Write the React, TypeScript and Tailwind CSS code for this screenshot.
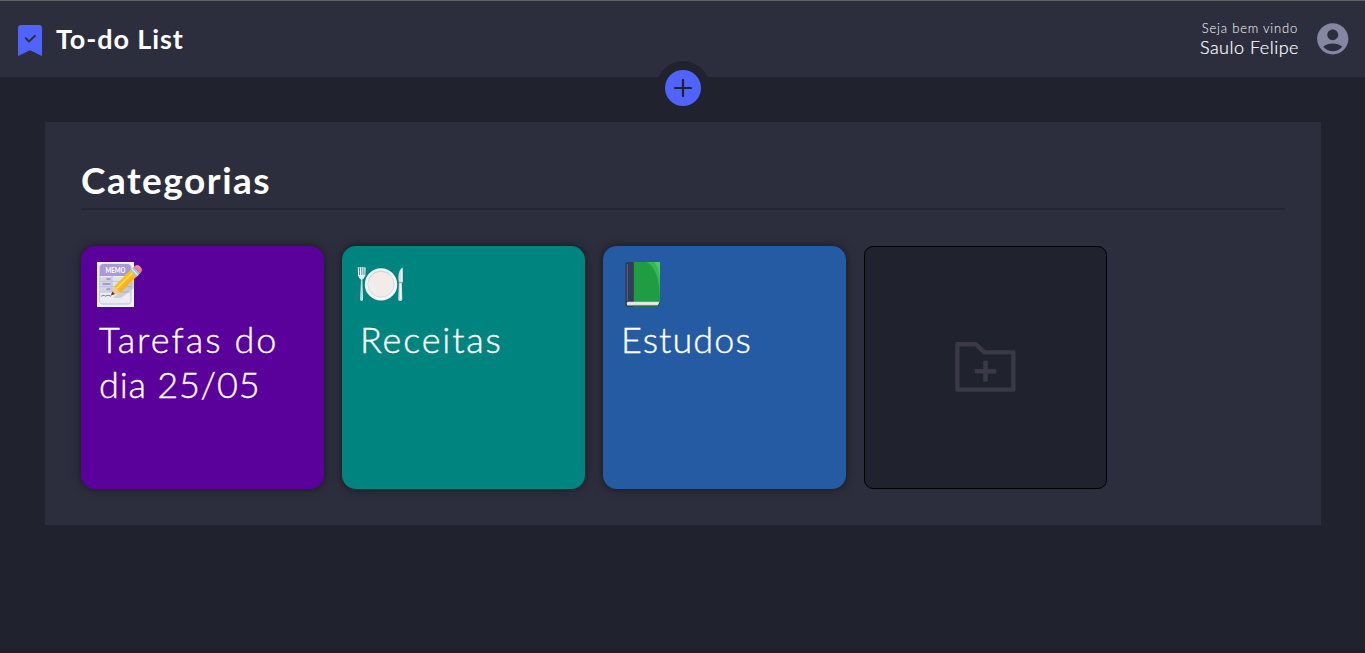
import React from "react";
import { MdAccountCircle } from "react-icons/md";

function BookmarkIcon() {
  return (
    <svg width="24" height="31" viewBox="0 0 24 31" className="shrink-0">
      <path d="M3 0h18a3 3 0 0 1 3 3v28l-12-5.7L0 31V3a3 3 0 0 1 3-3z" fill="#5163ff" />
      <path d="M7.8 13.2l3.2 3.3 6-5.8" fill="none" stroke="#2d2e3d" strokeWidth="2" strokeLinecap="round" strokeLinejoin="round" />
    </svg>
  );
}

function FolderAddIcon() {
  return (
    <svg width="62" height="52" viewBox="0 0 62 52" fill="none" stroke="#3a3947">
      <path d="M2.4 2.2h18.5l8.5 8.2h29V47.6h-56z" strokeWidth="4.4" strokeLinejoin="round" />
      <path d="M30.5 18.7v21M19.7 29.2h21.6" strokeWidth="4.6" />
    </svg>
  );
}

function MemoIcon() {
  return (
    <svg width="48" height="48" viewBox="0 0 48 48">
      <defs>
        <linearGradient id="pencil" x1="0" y1="0" x2="1" y2="1">
          <stop offset="0" stopColor="#ffd63f" />
          <stop offset="0.55" stopColor="#fbb51c" />
          <stop offset="1" stopColor="#e98c10" />
        </linearGradient>
      </defs>
      <rect x="1" y="2" width="37" height="45" fill="#f4f1f5" />
      <rect x="3.5" y="4.5" width="31.5" height="39.5" rx="3.5" fill="#efeaf0" stroke="#c6cfe0" strokeWidth="1.3" />
      <path d="M4 16V8a4 4 0 0 1 4-4h23a4 4 0 0 1 4 4v8z" fill="#a99ad6" />
      <path d="M4 17h12v15H4z" fill="#d3d5df" />
      <path d="M16 17h19v15H16z" fill="#dfe4ef" />
      <path d="M4 21.3h31M4 26.6h31M4 32h31M16 16v16" stroke="#b6c3d9" strokeWidth="0.9" />
      <path d="M10.5 19h4M6.5 24h8M10.5 29.3h4" stroke="#a798d6" strokeWidth="2" />
      <path d="M5 36.2l3-1 1 1 3-1 3 1" stroke="#77737b" strokeWidth="0.9" fill="none" />
      <text x="19.5" y="12.8" textAnchor="middle" textLength="20" lengthAdjust="spacingAndGlyphs" fontSize="7.5" fontWeight="700" fill="#fff">MEMO</text>
      <path d="M17 38L41 17l-3 11-13 10z" fill="#69606c" opacity="0.22" />
      <path d="M15 35.5l3.2-9.2L35.5 9l6.2 6.5-17.3 17z" fill="url(#pencil)" />
      <path d="M15 35.5l3.2-9.2 3 1.6.6 2.6 2.6 2z" fill="#f0c891" />
      <path d="M15 35.5l1.3-3.9 2.5 2.5z" fill="#403c3c" />
      <path d="M21 28L38 11.5" stroke="#ffe05b" strokeWidth="1.5" />
      <path d="M34 10.3l3.7-3.5 6.5 6.4-3.6 3.9z" fill="#a8c0c7" />
      <path d="M35.6 8.8l6.4 6.5" stroke="#e4f0f2" strokeWidth="1.2" />
      <path d="M37.6 6.9c1.5-1.9 4.2-2.4 6.5-.4 2.2 1.9 2.6 4.5.2 6.8z" fill="#ee7e98" />
      <path d="M40 6.5c1.2-.8 2.6-.4 3.6.7" stroke="#f9abb9" fill="none" />
    </svg>
  );
}

function PlateIcon() {
  return (
    <svg width="48" height="48" viewBox="0 0 48 48">
      <path d="M2.3 7.5l.5 8.5c0 2.2 1 3 2.2 3.4L4.2 39c0 2.6 2.8 2.6 2.8 0l-.7-19.6c1.5-.5 2.3-1.5 2.4-3.4l.4-8.5" fill="#e5e9ed" />
      <path d="M2.3 7.5l.4 9M4.6 7.5v9M6.9 7.5v9M9.1 7.5l-.4 9" stroke="#f7f8fa" strokeWidth="1.1" />
      <path d="M3.5 8v7M5.8 8v7M7.9 8v7" stroke="#18867f" strokeWidth="0.8" />
      <path d="M5.6 20v20" stroke="#bdc6ce" strokeWidth="0.8" />
      <circle cx="25" cy="24.4" r="16.2" fill="#f6f6f8" />
      <circle cx="25" cy="24" r="13.2" fill="#eeedf0" stroke="#d8dbe1" strokeWidth="1" />
      <path d="M14 20c3-7 8-8 13-7l6 3 3 5-4 4 1 5-5 5-6-4-1-5-5-1z" fill="#f4ebe7" />
      <path d="M13.5 18.5c4-7.8 14.7-9.7 20.5-3" fill="none" stroke="#cfd2da" strokeWidth="0.8" />
      <path d="M46.8 7.5c-3.1 1.1-4.5 6-4.4 11.5l.5 4-.7 16c0 2.8 4.1 2.8 4.1 0l-.5-16 1-1z" fill="#d7dde2" />
      <path d="M45.8 9.5v12M44.7 24v15" stroke="#f8fafb" strokeWidth="1" />
      <path d="M43.2 22.5h2.5" stroke="#929fab" strokeWidth="1" />
    </svg>
  );
}

function BookIcon() {
  return (
    <svg width="48" height="48" viewBox="0 0 48 48">
      <path d="M6.5 3.2L9 2h32v41l-2 3.7H9c-1.6 0-2.5-1-2.5-2.7z" fill="#26384e" />
      <path d="M14.5 2H41v40H14.5z" fill="#1e9d42" />
      <path d="M28 2h13v37c-.5-17-3-30-13-37z" fill="#38b854" />
      <path d="M35 2h6v18c-.7-8-2-14-6-18z" fill="#4acc64" />
      <path d="M9 2h5.5v40H8z" fill="#343b56" />
      <path d="M8.3 4v37" stroke="#506077" strokeWidth="1.3" />
      <path d="M9 41.7h31.5l-1.6 3.8H9c-1.7 0-1.7-3.8 0-3.8z" fill="#dedede" />
      <path d="M9 43.2h30.5" stroke="#f5f4ef" strokeWidth="0.8" />
      <path d="M14 46.2h25" stroke="#27864b" strokeWidth="1" />
    </svg>
  );
}

interface Category {
  lines: { text: string; spacing: string }[];
  color: string;
  icon: React.ReactNode;
  iconOffset: string;
}

const categories: Category[] = [
  {
    lines: [
      { text: "Tarefas do", spacing: "tracking-[2.05px]" },
      { text: "dia 25/05", spacing: "tracking-[0.8px]" },
    ],
    color: "bg-[#5a009b]",
    icon: <MemoIcon />,
    iconOffset: "ml-[15px]",
  },
  {
    lines: [{ text: "Receitas", spacing: "tracking-[1.85px]" }],
    color: "bg-[#008480]",
    icon: <PlateIcon />,
    iconOffset: "ml-[14px]",
  },
  {
    lines: [{ text: "Estudos", spacing: "tracking-[1.1px]" }],
    color: "bg-[#245ba3]",
    icon: <BookIcon />,
    iconOffset: "ml-4",
  },
];

function CategoryCard({ lines, color, icon, iconOffset }: Category) {
  return (
    <article className={`h-[243px] w-[243px] rounded-[14px] pt-[14px] shadow-[0_0_9px_rgba(0,0,0,0.5)] ${color}`}>
      <div className={`h-[57px] ${iconOffset}`}>{icon}</div>
      <h2 className="ml-[18px] text-[36px] leading-[45px] font-light text-white [-webkit-text-stroke:0.4px_white]">
        {lines.map((line) => (
          <span key={line.text} className={`block whitespace-nowrap ${line.spacing}`}>
            {line.text}
          </span>
        ))}
      </h2>
    </article>
  );
}

export default function App() {
  return (
    <div className="flex h-[653px] w-full flex-col overflow-hidden border-t border-b-4 border-t-[#626265] border-b-[#1f1e27] bg-[#20222e] font-[Lato,sans-serif] text-white">
      <header className="relative flex h-[76px] shrink-0 items-center justify-between bg-[#2d2e3d] pr-[17px] pl-[18px]">
        <div className="flex items-center">
          <div className="pt-[3px]">
            <BookmarkIcon />
          </div>
          <h1 className="ml-[14px] text-[27px] leading-[34px] font-bold tracking-[0.9px] whitespace-nowrap">To-do List</h1>
        </div>
        <div className="flex items-center">
          <div className="flex flex-col items-end pr-[17.5px] pb-[3px] whitespace-nowrap">
            <span className="mr-px text-[13px] leading-[18px] font-light tracking-[0.8px] text-white">Seja bem vindo</span>
            <span className="text-[18px] leading-[20px] font-light tracking-[0.5px] [-webkit-text-stroke:0.2px_white]">Saulo Felipe</span>
          </div>
          <MdAccountCircle className="-m-[3px] size-[37.5px] text-[#8486a2]" />
        </div>
        <button
          aria-label="Adicionar"
          className="absolute top-[60px] left-1/2 flex size-[54px] -translate-x-1/2 items-center justify-center rounded-full bg-[#20222e]"
        >
          <span className="flex size-9 items-center justify-center rounded-full bg-[#5163ff]">
            <svg width="18" height="18" viewBox="0 0 18 18">
              <path d="M9 1v16M1 9h16" stroke="#20222e" strokeWidth="2.2" strokeLinecap="round" />
            </svg>
          </span>
        </button>
      </header>
      <main className="mt-[45px] mr-[44px] ml-[45px] h-[403px] shrink-0 bg-[#2d2e3d] px-9 pt-9">
        <div className="h-[52px] border-b-2 border-[#252632]">
          <h2 className="text-[37px] leading-[44px] font-bold tracking-[1.5px] whitespace-nowrap">Categorias</h2>
        </div>
        <section className="mt-9 flex gap-[18px]">
          {categories.map((category) => (
            <CategoryCard key={category.color} {...category} />
          ))}
          <button
            aria-label="Nova categoria"
            className="flex size-[243px] items-center justify-center rounded-[9px] border border-black bg-[#20222e]"
          >
            <FolderAddIcon />
          </button>
        </section>
      </main>
    </div>
  );
}
